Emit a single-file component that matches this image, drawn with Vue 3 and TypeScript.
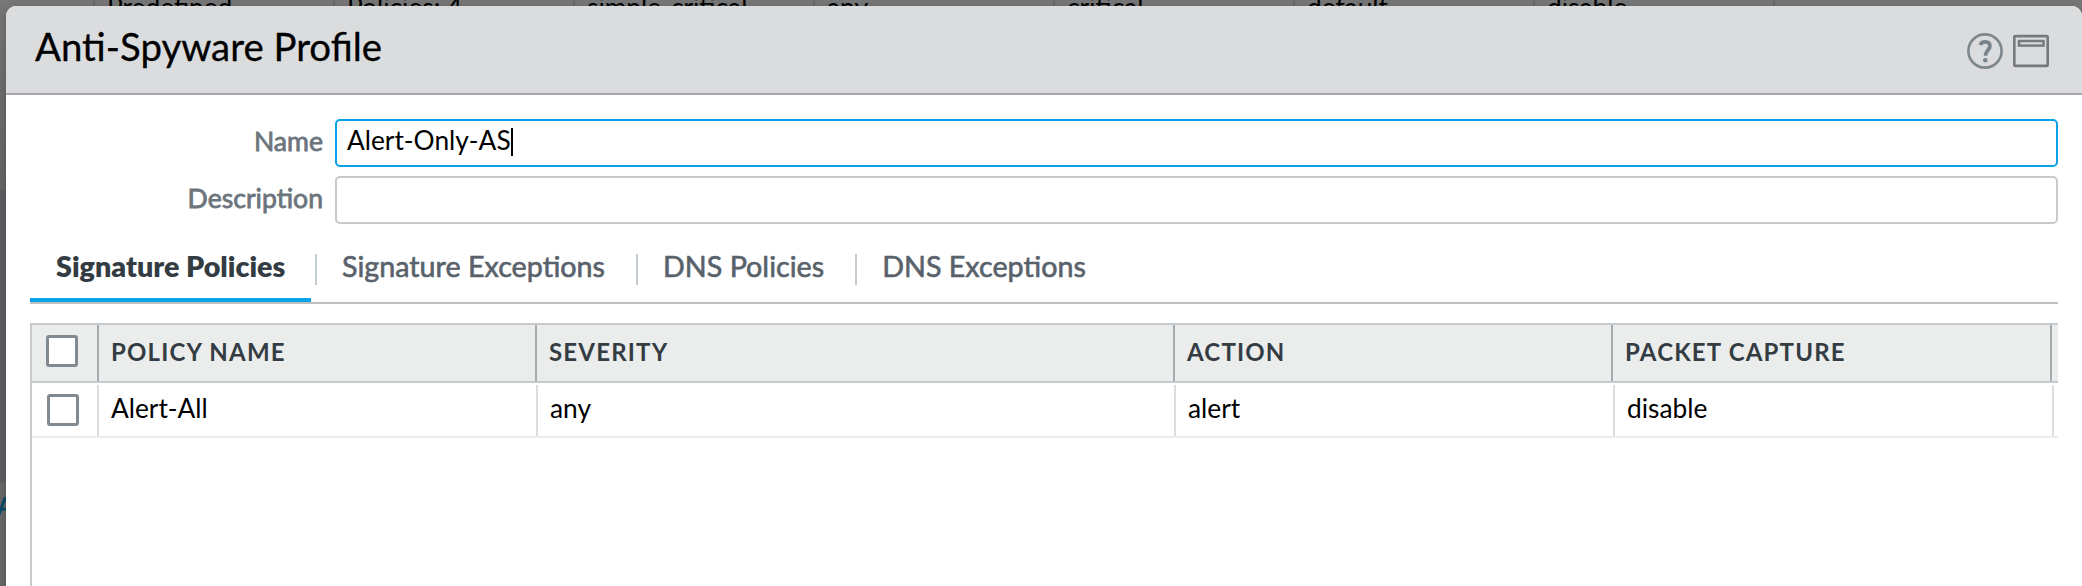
<script setup lang="ts">
interface Column {
  key: 'name' | 'severity' | 'action' | 'capture'
  title: string
}

type Policy = Record<Column['key'], string>

const columns: Column[] = [
  { key: 'name', title: 'Policy Name' },
  { key: 'severity', title: 'Severity' },
  { key: 'action', title: 'Action' },
  { key: 'capture', title: 'Packet Capture' },
]

const policies: Policy[] = [
  { name: 'Alert-All', severity: 'any', action: 'alert', capture: 'disable' },
]

const tabs = ['Signature Policies', 'Signature Exceptions', 'DNS Policies', 'DNS Exceptions']
const activeTab = tabs[0]

const backdropCells = ['', 'Predefined', 'Policies: 4', 'simple-critical', 'any', 'critical', 'default', 'disable']
</script>

<template>
  <div class="page">
    <div class="backdrop">
      <div class="backdrop-row">
        <span v-for="(cell, i) in backdropCells" :key="i" class="backdrop-cell">{{ cell }}</span>
      </div>
      <div class="side side-top"></div>
      <div class="side side-mid"></div>
      <div class="side side-bottom"><span class="add-link">Add</span></div>
    </div>

    <section class="dialog">
      <header class="dialog-header">
        <h1 class="title">Anti-Spyware Profile</h1>
        <div class="tools">
          <svg class="tool" viewBox="0 0 36 36">
            <circle cx="18" cy="18" r="16.6" fill="none" stroke="#7d878e" stroke-width="2.6" />
            <path d="M13.4 12C14.2 9.4 16.2 8.9 18.2 8.9c2.9 0 4.7 1.6 4.7 4.2 0 4-4.4 4.6-4.4 9.6" fill="none" stroke="#78838b" stroke-width="3.8" />
            <circle cx="18.3" cy="27.2" r="2.3" fill="#78838b" />
          </svg>
          <svg class="tool" viewBox="0 0 36 36">
            <rect x="1.3" y="3.2" width="33.4" height="29.6" rx="1" fill="none" stroke="#77797d" stroke-width="2.7" />
            <rect x="6" y="8" width="24.5" height="4.6" fill="none" stroke="#77797d" stroke-width="2.5" />
          </svg>
        </div>
      </header>

      <div class="form">
        <label class="label">Name</label>
        <div class="field focused">Alert-Only-AS<i class="caret"></i></div>
        <label class="label">Description</label>
        <div class="field"></div>
      </div>

      <nav class="tabs">
        <div v-for="tab in tabs" :key="tab" class="tab" :class="{ active: tab === activeTab }">
          <span class="tab-text">{{ tab }}</span>
        </div>
      </nav>

      <div class="grid">
        <div class="row head">
          <div class="cell check"><i class="box"></i></div>
          <div v-for="col in columns" :key="col.key" class="cell">{{ col.title }}</div>
          <div class="cell"></div>
        </div>
        <div v-for="policy in policies" :key="policy.name" class="row body">
          <div class="cell check"><i class="box"></i></div>
          <div v-for="col in columns" :key="col.key" class="cell">{{ policy[col.key] }}</div>
          <div class="cell"></div>
        </div>
      </div>
    </section>
  </div>
</template>

<style>
body {
  margin: 0;
  overflow: hidden;
}
</style>

<style scoped>
* {
  box-sizing: border-box;
}
.page {
  position: relative;
  width: 2082px;
  height: 586px;
  overflow: hidden;
  font-family: Lato, "Liberation Sans", sans-serif;
  font-size: 26.3px;
  color: #000;
}
.backdrop {
  position: absolute;
  inset: 0;
  background: #777;
  overflow: hidden;
}
.backdrop-row {
  display: flex;
  height: 40px;
  margin-left: -145px;
}
.backdrop-cell {
  flex: 0 0 240px;
  padding-left: 12px;
  border-right: 2px solid #696969;
  line-height: 32px;
  margin-top: -9px;
  white-space: nowrap;
}
.side {
  width: 20px;
}
.side-top {
  height: 150px;
  background: linear-gradient(#747474, #676767);
}
.side-mid {
  height: 292px;
  background: #5e6063;
}
.side-bottom {
  height: 104px;
  background: #6a6a6a;
}
.add-link {
  display: block;
  padding-top: 8px;
  margin-left: -3px;
  line-height: 32px;
  font-size: 24px;
  font-weight: 700;
  color: #064d6e;
}
.dialog {
  position: absolute;
  left: 6px;
  top: 6px;
  width: 2076px;
  height: 600px;
  background: #fff;
  border-radius: 10px 10px 0 0;
  box-shadow: 0 4px 12px rgba(0, 0, 0, 0.25);
  overflow: hidden;
}
.dialog-header {
  display: flex;
  justify-content: space-between;
  height: 89px;
  padding: 0 33px 0 29px;
  background: #dbdcde;
  border-bottom: 2px solid #a6a7aa;
}
.title {
  margin: 15px 0 0;
  font-size: 38.4px;
  font-weight: 400;
  line-height: 50px;
  -webkit-text-stroke: 0.3px #000;
}
.tools {
  display: flex;
  gap: 10px;
  padding-top: 27px;
}
.tool {
  width: 36px;
  height: 36px;
}
.form {
  display: grid;
  grid-template-columns: 317px 1723px;
  grid-auto-rows: 48px;
  gap: 9px 12px;
  padding-top: 24px;
}
.label {
  text-align: right;
  line-height: 44px;
  font-size: 26.6px;
  color: #6c757c;
  -webkit-text-stroke: 0.8px #6c757c;
}
.field {
  display: flex;
  align-items: center;
  padding: 0 0 6px 10px;
  border: 2px solid #c6cacd;
  border-radius: 5px;
}
.focused {
  border-color: #0aa3e8;
}
.caret {
  width: 2px;
  height: 28px;
  margin-top: 4px;
  background: #000;
}
.tabs {
  display: flex;
  height: 74px;
  margin: 6px 24px 0;
  border-bottom: 2px solid #bfbfbf;
}
.tab {
  display: flex;
  align-items: flex-start;
  padding-top: 24px;
  font-size: 28.7px;
  color: #59626b;
}
.tab-text {
  height: 31px;
  line-height: 24px;
  white-space: nowrap;
  padding: 0 31px 0 25px;
  -webkit-text-stroke: 0.6px currentColor;
}
.tab + .tab .tab-text {
  border-left: 2px solid #c3cdd1;
}
.tab.active {
  width: 285px;
  font-weight: 800;
  color: #343c43;
  background: linear-gradient(#0aa3e8, #0aa3e8) 0 68px / 281px 4px no-repeat;
}
.tab.active .tab-text {
  padding-left: 26px;
  -webkit-text-stroke: 0;
}
.grid {
  height: 300px;
  margin: 19px 24px 0;
  border-top: 2px solid #c6c9cd;
  border-left: 2px solid #c6c9cd;
}
.row {
  display: grid;
}
.head {
  grid-template-columns: 67px 438px 638px 438px 439px 6px;
  height: 58px;
  background: #ebeded;
  border-bottom: 2px solid #c6c9cd;
  font-size: 24px;
  font-weight: 700;
  letter-spacing: 1.18px;
  text-transform: uppercase;
  color: #343c43;
}
.body {
  grid-template-columns: 67px 439px 638px 439px 439px 4px;
  height: 55px;
  padding-top: 2px;
  border-bottom: 2px solid #eceded;
}
.cell {
  padding-left: 12px;
  border-right: 2px solid #dcdede;
  line-height: 46px;
  white-space: nowrap;
  min-width: 0;
}
.head .cell {
  border-color: #a5abaf;
  line-height: 53px;
}
.cell:last-child {
  border-right: 0;
  padding: 0;
}
.check {
  padding: 9px 0 0 15px;
}
.head .check {
  padding: 10px 0 0 14px;
}
.box {
  display: block;
  width: 32px;
  height: 32px;
  background: #fff;
  border: 3px solid #818a91;
  border-radius: 3px;
}
</style>
